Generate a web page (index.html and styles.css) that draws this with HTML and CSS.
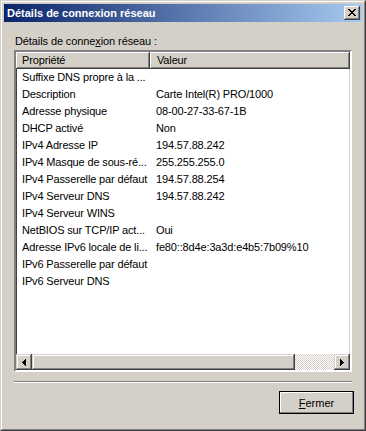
FILE: index.html
```html
<!DOCTYPE html>
<html lang="fr">
<head>
    <meta charset="UTF-8">
    <title>Détails de connexion réseau</title>
    <link rel="stylesheet" href="styles.css">
</head>
<body>
    <div class="window">
        <div class="frame">
            <div class="titlebar">
                <span class="title">Détails de connexion réseau</span>
                <button class="close-btn" title="Fermer">
                    <svg width="8" height="7" viewBox="0 0 8 7" shape-rendering="crispEdges">
                        <path fill="#000" d="M0 0h2v1H0z M6 0h2v1H6z M1 1h2v1H1z M5 1h2v1H5z M2 2h4v1H2z M3 3h2v1H3z M2 4h4v1H2z M1 5h2v1H1z M5 5h2v1H5z M0 6h2v1H0z M6 6h2v1H6z"/>
                    </svg>
                </button>
            </div>
            <div class="dialog-body">
                <div class="label">Détails de conne<u>x</u>ion réseau :</div>
                <div class="listview">
                    <div class="lv-header">
                        <div class="col-head col-prop">Propriété</div>
                        <div class="col-head col-val">Valeur</div>
                    </div>
                    <div class="lv-rows">
                        <div class="row"><span class="prop">Suffixe DNS propre à la ...</span><span class="val"></span></div>
                        <div class="row"><span class="prop">Description</span><span class="val">Carte Intel(R) PRO/1000</span></div>
                        <div class="row"><span class="prop">Adresse physique</span><span class="val">08-00-27-33-67-1B</span></div>
                        <div class="row"><span class="prop">DHCP activé</span><span class="val">Non</span></div>
                        <div class="row"><span class="prop">IPv4 Adresse IP</span><span class="val">194.57.88.242</span></div>
                        <div class="row"><span class="prop">IPv4 Masque de sous-ré...</span><span class="val">255.255.255.0</span></div>
                        <div class="row"><span class="prop">IPv4 Passerelle par défaut</span><span class="val">194.57.88.254</span></div>
                        <div class="row"><span class="prop">IPv4 Serveur DNS</span><span class="val">194.57.88.242</span></div>
                        <div class="row"><span class="prop">IPv4 Serveur WINS</span><span class="val"></span></div>
                        <div class="row"><span class="prop">NetBIOS sur TCP/IP act...</span><span class="val">Oui</span></div>
                        <div class="row"><span class="prop">Adresse IPv6 locale de li...</span><span class="val">fe80::8d4e:3a3d:e4b5:7b09%10</span></div>
                        <div class="row"><span class="prop">IPv6 Passerelle par défaut</span><span class="val"></span></div>
                        <div class="row"><span class="prop">IPv6 Serveur DNS</span><span class="val"></span></div>
                    </div>
                    <div class="hscroll">
                        <div class="sb-btn">
                            <svg width="4" height="7" viewBox="0 0 4 7" shape-rendering="crispEdges">
                                <path fill="#000" d="M0 3h1v1H0z M1 2h1v3H1z M2 1h1v5H2z M3 0h1v7H3z"/>
                            </svg>
                        </div>
                        <div class="sb-thumb"></div>
                        <div class="sb-track"></div>
                        <div class="sb-btn">
                            <svg width="4" height="7" viewBox="0 0 4 7" shape-rendering="crispEdges">
                                <path fill="#000" d="M3 3h1v1H3z M2 2h1v3H2z M1 1h1v5H1z M0 0h1v7H0z"/>
                            </svg>
                        </div>
                    </div>
                </div>
                <div class="separator"></div>
                <div class="actions">
                    <button class="btn btn-default"><u>F</u>ermer</button>
                </div>
            </div>
        </div>
    </div>
</body>
</html>
```

FILE: styles.css
```css
body {
    margin: 0;
    font-family: "Liberation Sans", Arial, sans-serif;
    font-size: 11px;
    color: #000;
    background-color: #d4d0c8;
}
.window {
    width: 366px;
    height: 431px;
    box-sizing: border-box;
    border: 1px solid;
    border-color: #d4d0c8 #404040 #404040 #d4d0c8;
    background-color: #d4d0c8;
}
.frame {
    height: 100%;
    box-sizing: border-box;
    border: 1px solid;
    border-color: #fff #808080 #808080 #fff;
    padding: 2px;
    display: flex;
    flex-direction: column;
}
.titlebar {
    height: 18px;
    display: flex;
    align-items: center;
    justify-content: space-between;
    background: linear-gradient(to right, #0a246a, #a6caf0);
    padding-left: 3px;
}
.title {
    color: #fff;
    font-weight: bold;
    font-size: 11px;
    line-height: 13px;
}
.close-btn {
    width: 16px;
    height: 14px;
    margin-right: 2px;
    padding: 0;
    border: none;
    background-color: #d4d0c8;
    box-shadow: inset -1px -1px #404040, inset 1px 1px #fff, inset -2px -2px #808080, inset 2px 2px #d4d0c8;
    display: flex;
    align-items: center;
    justify-content: center;
    padding-bottom: 1px;
}
.dialog-body {
    flex: 1;
    padding: 0 10px;
    display: flex;
    flex-direction: column;
}
.label {
    margin-top: 13px;
    line-height: 13px;
    padding-left: 1px;
    letter-spacing: -0.1px;
}
.listview {
    margin-top: 2px;
    height: 322px;
    box-sizing: border-box;
    border: 2px solid;
    border-color: #808080 #fff #fff #808080;
    box-shadow: inset 1px 1px #404040, inset -1px -1px #d4d0c8;
    background-color: #fff;
    display: flex;
    flex-direction: column;
    letter-spacing: -0.15px;
}
.lv-header {
    display: flex;
    height: 17px;
    flex-shrink: 0;
}
.col-head {
    box-sizing: border-box;
    background-color: #d4d0c8;
    box-shadow: inset -1px -1px #404040, inset 1px 1px #fff, inset -2px -2px #808080;
    line-height: 16px;
    white-space: nowrap;
}
.col-prop {
    width: 134px;
    padding-left: 6px;
}
.col-val {
    flex: 1;
    padding-left: 7px;
}
.lv-rows {
    flex: 1;
}
.row {
    display: flex;
    height: 17px;
    line-height: 17px;
    white-space: nowrap;
}
.prop {
    width: 134px;
    flex-shrink: 0;
    box-sizing: border-box;
    padding-left: 6px;
}
.val {
    padding-left: 6px;
}
.hscroll {
    height: 16px;
    display: flex;
    flex-shrink: 0;
}
.sb-btn,
.sb-thumb {
    background-color: #d4d0c8;
    box-shadow: inset -1px -1px #404040, inset 1px 1px #d4d0c8, inset -2px -2px #808080, inset 2px 2px #fff;
}
.sb-btn {
    width: 16px;
    display: flex;
    align-items: center;
    justify-content: center;
}
.sb-thumb {
    width: 263px;
}
.sb-track {
    flex: 1;
    background: repeating-conic-gradient(#d4d0c8 0 25%, #fff 0 50%) 0 0 / 2px 2px;
}
.separator {
    margin-top: 9px;
    border-top: 1px solid #808080;
    border-bottom: 1px solid #fff;
    height: 0;
}
.actions {
    display: flex;
    justify-content: flex-end;
    margin-top: 8px;
    margin-right: -2px;
}
.btn {
    width: 75px;
    height: 23px;
    font-family: "Liberation Sans", Arial, sans-serif;
    font-size: 11px;
    color: #000;
    background-color: #d4d0c8;
    border: none;
    padding: 0;
    box-shadow: inset -1px -1px #404040, inset 1px 1px #fff, inset -2px -2px #808080;
}
.btn-default {
    border: 1px solid #000;
    box-shadow: inset -1px -1px #808080, inset 1px 1px #fff;
}
```
